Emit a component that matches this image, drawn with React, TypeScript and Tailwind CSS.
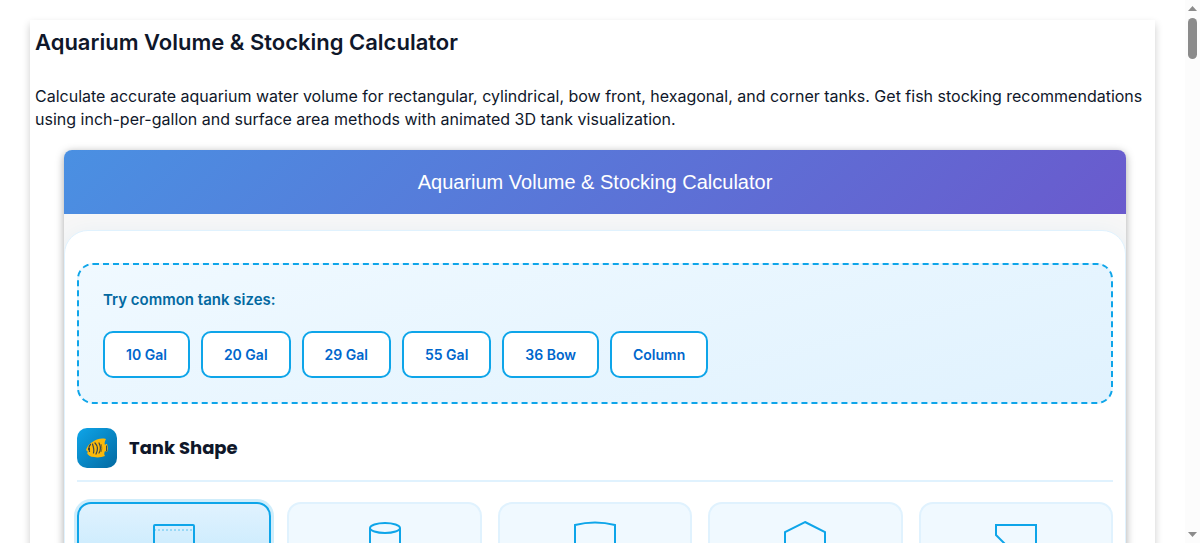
import type { ReactNode } from "react";
import { useState } from "react";

const TANK_SIZES = ["10 Gal", "20 Gal", "29 Gal", "55 Gal", "36 Bow", "Column"];

interface TankShape {
  id: string;
  label: string;
  drawing: ReactNode;
}

const TANK_SHAPES: TankShape[] = [
  {
    id: "rectangular",
    label: "Rectangular",
    drawing: (
      <>
        <rect x="10" y="5" width="40" height="50" rx="1" />
        <path d="M10 10h40" strokeDasharray="2 2" opacity="0.3" />
      </>
    ),
  },
  {
    id: "cylinder",
    label: "Cylinder",
    drawing: (
      <>
        <ellipse cx="30" cy="8" rx="15" ry="5" />
        <path d="M15 8v44c0 3 7 5 15 5s15-2 15-5V8" />
      </>
    ),
  },
  {
    id: "bow-front",
    label: "Bow Front",
    drawing: <path d="M10 5Q30 0 50 5v50H10Z" />,
  },
  {
    id: "hexagonal",
    label: "Hexagonal",
    drawing: <path d="M30 2 50 12v36L30 58 10 48V12Z" />,
  },
  {
    id: "corner",
    label: "Corner",
    drawing: <path d="M10 5h40v50L10 15Z" />,
  },
];

function FishIcon() {
  return (
    <svg viewBox="0 0 22 20" className="h-5 w-[22px]" aria-hidden="true">
      <path
        d="M0 12C1 8 4 5 8 3c3-2 7-3 12-2-1 2-2 4-1 6l1-1h1c1 3 1 6 0 8l-2-1c-1 2-1 4 0 5-3 1-7 2-11 1-4 0-6-2-7-4l1-1Z"
        fill="#fbb90a"
      />
      <g fill="none" stroke="#37474f" strokeWidth="1.2" strokeLinecap="round">
        <path d="M4.500 6.500c-2 2-2 4-1 7" />
        <path d="M6.500 6c1 3 2 6 1 9" />
        <path d="M9 5c3 3 3 7 1 11" />
        <path d="M13 5c2 4 2 7 0 10" />
        <path d="M20.500 8v5" strokeWidth="1" />
      </g>
      <path d="M15 6c1 3 1 6 0 8" fill="none" stroke="#6d5a28" strokeWidth="0.8" />
      <circle cx="3" cy="11" r="1" fill="#263238" />
    </svg>
  );
}

function Scrollbar() {
  return (
    <div className="flex w-[15px] shrink-0 flex-col items-center justify-between bg-[#fcfcfc] py-[6px]" aria-hidden="true">
      <div className="flex flex-col items-center gap-[7px]">
        <svg viewBox="0 0 9 5" className="h-[5px] w-[9px]" fill="#8b8b8b">
          <path d="M0 5 4.5 0 9 5Z" />
        </svg>
        <div className="h-[41px] w-[9px] rounded-full bg-[#8b8b8b]" />
      </div>
      <svg viewBox="0 0 9 5" className="h-[5px] w-[9px]" fill="#8b8b8b">
        <path d="M0 0h9L4.5 5Z" />
      </svg>
    </div>
  );
}

export default function App() {
  const [shape, setShape] = useState("rectangular");

  return (
    <div className="flex h-screen overflow-hidden bg-white font-['Inter',sans-serif] text-[#0f172a]">
      <main className="min-w-0 flex-1 px-[30px] pt-5">
        <div className="bg-white p-[5px] shadow-[0_4px_8px_rgba(0,0,0,0.2)]">
          <h1 className="text-[22px] leading-[34px] font-semibold">Aquarium Volume &amp; Stocking Calculator</h1>
          <p className="mt-[26px] text-base leading-[23px]">
            Calculate accurate aquarium water volume for rectangular, cylindrical, bow front, hexagonal, and corner
            tanks. Get fish stocking recommendations using inch-per-gallon and surface area methods with animated 3D
            tank visualization.
          </p>

          <div className="mt-[19px] mr-[24px] ml-[29px] overflow-hidden rounded-lg bg-[#f7f7f7] shadow-[0_2px_8px_rgba(0,0,0,0.35)]">
            <div className="bg-[linear-gradient(135deg,#4a90e2,#6a5acd)] py-4 text-center font-['Liberation_Sans',sans-serif] text-xl leading-8 text-white">
              Aquarium Volume &amp; Stocking Calculator
            </div>

            <div className="mt-4 rounded-3xl border border-[#e0f2fe] bg-white px-3 py-8 shadow-[0_4px_24px_rgba(2,132,199,0.08)]">
              {/* Presets */}
              <section className="rounded-2xl border-2 border-dashed border-[#0ea5e9] bg-[linear-gradient(165deg,#f0f9ff,#e0f2fe)] p-6">
                <h2 className="text-[15px] leading-[22px] font-semibold text-[#0369a1]">Try common tank sizes:</h2>
                <div className="mt-5 flex flex-wrap gap-[11px]">
                  {TANK_SIZES.map((size) => (
                    <button
                      key={size}
                      type="button"
                      className="rounded-[10px] border-2 border-[#0ea5e9] bg-white px-[21px] py-3 text-sm leading-[19px] font-semibold text-[#0066cc]"
                    >
                      {size}
                    </button>
                  ))}
                </div>
              </section>

              {/* Tank shape */}
              <section className="mt-6">
                <div className="flex items-center gap-3 border-b-2 border-[#e0f2fe] pb-3">
                  <div className="flex size-10 items-center justify-center rounded-[10px] bg-[linear-gradient(135deg,#0ea5e9,#0369a1)]">
                    <FishIcon />
                  </div>
                  <h2 className="font-['Poppins','Inter',sans-serif] text-lg font-bold">Tank Shape</h2>
                </div>
                <div className="mt-5 grid grid-cols-5 gap-4">
                  {TANK_SHAPES.map((item) => (
                    <button
                      key={item.id}
                      type="button"
                      aria-label={item.label}
                      aria-pressed={shape === item.id}
                      onClick={() => setShape(item.id)}
                      className={
                        shape === item.id
                          ? "flex flex-col items-center rounded-[14px] border-2 border-[#0ea5e9] bg-[linear-gradient(180deg,#e0f2fe,#bae6fd)] px-3 py-4 shadow-[0_0_0_3px_rgba(14,165,233,0.2)]"
                          : "flex flex-col items-center rounded-[14px] border-2 border-[#e0f2fe] bg-[#f0f9ff] px-3 py-4"
                      }
                    >
                      <svg viewBox="0 0 60 60" className="size-[60px]" fill="none" stroke="#0ea5e9" strokeWidth="2">
                        {item.drawing}
                      </svg>
                    </button>
                  ))}
                </div>
              </section>
            </div>
          </div>
        </div>
      </main>
      <Scrollbar />
    </div>
  );
}
